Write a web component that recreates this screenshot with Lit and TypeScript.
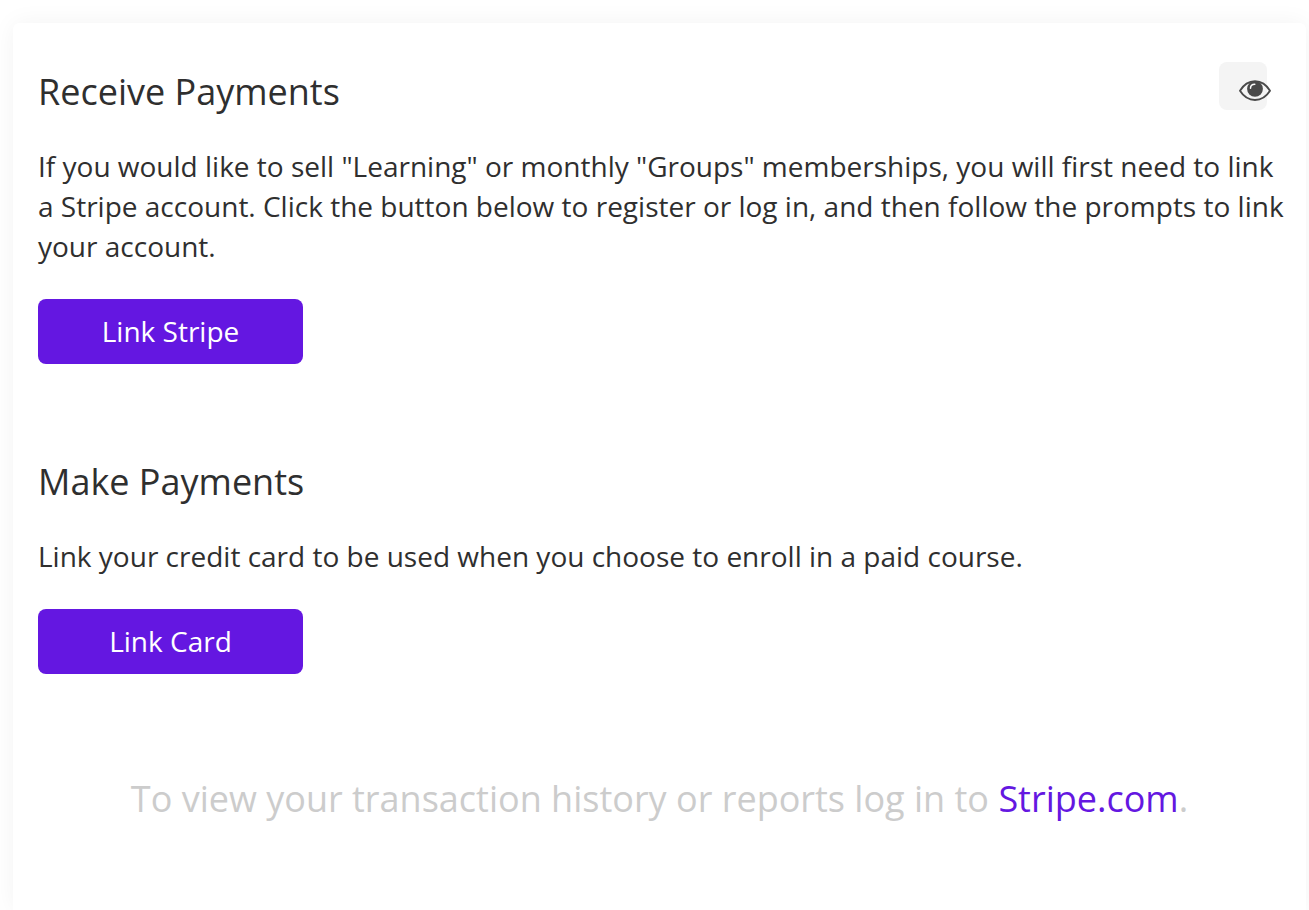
import { LitElement, html, css } from "lit";
import { customElement } from "lit/decorators.js";

@customElement("app-root")
class AppRoot extends LitElement {
  static styles = css`
    * { box-sizing: border-box; }
    :host {
      display: block;
      min-height: 100vh;
      padding: 23px 3px 0 13px;
      overflow: hidden;
      background: #fff;
      color: #2f2f2f;
      font: 28px/40px "Open Sans", sans-serif;
    }
    .card {
      min-height: calc(100vh - 23px);
      padding: 39px 20px 64px 25px;
      border-radius: 6px 6px 0 0;
      background: #fff;
      box-shadow: 0 0 24px rgba(0, 0, 0, 0.05);
    }
    .head { display: flex; justify-content: space-between; align-items: flex-start; }
    h2 { margin: 0; padding-top: 6px; font-size: 36px; line-height: 48px; font-weight: 400; }
    p { margin: 0; }
    .text { margin-top: 30px; }
    .eye {
      display: flex;
      align-items: flex-start;
      width: 48px; height: 48px; margin-right: 19px; padding: 18px 0 0 20px;
      border: 0; border-radius: 8px; background: #f4f4f4; color: #4a4a4a;
    }
    .eye svg { flex: none; display: block; width: 32px; height: 22px; overflow: visible; }
    .main {
      display: block;
      width: 265px; height: 65px; margin-top: 33px; padding: 0 0 2px;
      border: 0; border-radius: 8px; background: #6417e1; color: #fff;
      font: inherit;
    }
    .next { margin-top: 88px; }
    .foot { margin-top: 101px; padding-right: 5px; text-align: center; font-size: 36px; line-height: 48px; color: #ccc; }
    a { color: #6417e1; text-decoration: none; }
  `;

  render() {
    return html`
      <main class="card">
        <section>
          <div class="head">
            <h2>Receive Payments</h2>
            <button class="eye" aria-label="Show preview">
              <svg viewBox="0 0 32 22" fill="none" stroke="currentColor" aria-hidden="true">
                <path d="M1 10.8C4.5 4.8 9.8 1.2 16 1.2S27.5 4.8 31 10.8C27.5 16.4 22.2 20 16 20S4.500 16.400 1 10.800Z" stroke-width="1.900" stroke-linejoin="round" />
                <circle cx="16" cy="8.800" r="7.900" fill="currentColor" stroke="none" />
                <path d="M11.500 8.200C11.500 5.800 13.200 4.200 15.800 4.200" stroke="#fff" stroke-width="1.500" stroke-linecap="round" />
              </svg>
            </button>
          </div>
          <p class="text">If you would like to sell "Learning" or monthly "Groups" memberships, you will first need to link a Stripe account. Click the button below to register or log in, and then follow the prompts to link your account.</p>
          <button class="main">Link Stripe</button>
        </section>
        <section class="next">
          <h2>Make Payments</h2>
          <p class="text">Link your credit card to be used when you choose to enroll in a paid course.</p>
          <button class="main">Link Card</button>
        </section>
        <p class="foot">To view your transaction history or reports log in to <a href="#">Stripe.com</a>.</p>
      </main>
    `;
  }
}
